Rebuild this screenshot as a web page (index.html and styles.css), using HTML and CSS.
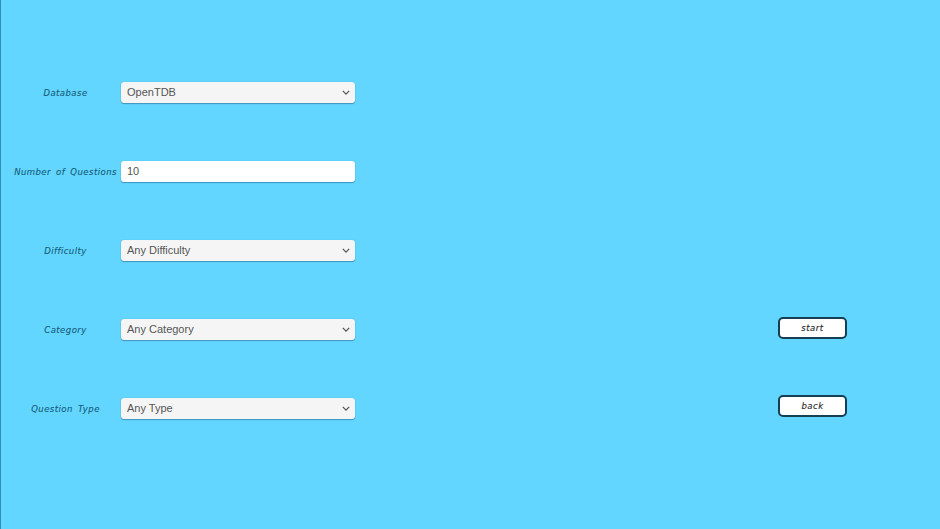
FILE: index.html
```html
<!DOCTYPE html>
<html lang="en">
<head>
<meta charset="utf-8">
<title>Quiz setup</title>
<link rel="stylesheet" href="styles.css">
</head>
<body>
<div class="page">
  <form class="form">
    <div class="row">
      <label class="label">Database</label>
      <div class="field"><select class="control select"><option>OpenTDB</option></select>
        <svg class="chev" viewBox="0 0 10 6"><path d="M1 1l4 4 4-4"/></svg></div>
    </div>
    <div class="row">
      <label class="label">Number of Questions</label>
      <div class="field"><input class="control input" value="10"></div>
    </div>
    <div class="row">
      <label class="label">Difficulty</label>
      <div class="field"><select class="control select"><option>Any Difficulty</option></select>
        <svg class="chev" viewBox="0 0 10 6"><path d="M1 1l4 4 4-4"/></svg></div>
    </div>
    <div class="row">
      <label class="label">Category</label>
      <div class="field"><select class="control select"><option>Any Category</option></select>
        <svg class="chev" viewBox="0 0 10 6"><path d="M1 1l4 4 4-4"/></svg></div>
    </div>
    <div class="row">
      <label class="label">Question Type</label>
      <div class="field"><select class="control select"><option>Any Type</option></select>
        <svg class="chev" viewBox="0 0 10 6"><path d="M1 1l4 4 4-4"/></svg></div>
    </div>
  </form>
  <div class="actions">
    <button class="btn" type="button">start</button>
    <button class="btn" type="button">back</button>
  </div>
</div>
</body>
</html>
```
FILE: styles.css
```css
html, body {
  margin: 0;
  height: 100%;
}
body {
  background: #62d6ff;
  overflow: hidden;
}
.page {
  box-sizing: border-box;
  height: 529px;
  border-left: 1px solid #2f8fb5;
  display: flex;
  justify-content: space-between;
  padding: 82px 93px 0 0;
}
.form {
  display: flex;
  flex-direction: column;
  gap: 58px;
}
.row {
  display: flex;
  align-items: center;
  height: 21px;
}
.label {
  width: 120px;
  padding: 0 4px 0 13px;
  box-sizing: border-box;
  text-align: center;
  white-space: nowrap;
  font-family: "DejaVu Sans", sans-serif;
  font-style: italic;
  font-size: 8.5px;
  letter-spacing: 0.45px;
  word-spacing: 2px;
  color: #155a78;
  -webkit-text-stroke: 0.1px #155a78;
}
.field {
  position: relative;
  width: 234px;
  height: 21px;
}
.control {
  box-sizing: border-box;
  display: block;
  width: 100%;
  height: 100%;
  margin: 0;
  padding: 0 0 1px 6px;
  border: 0;
  border-radius: 3px;
  box-shadow: 0 1px 1px rgba(50, 125, 160, 0.7), 0 0 1px rgba(50, 125, 160, 0.6);
  font-family: "Liberation Sans", sans-serif;
  font-size: 11px;
  color: #555;
  outline: none;
}
.select {
  appearance: none;
  background: #f5f5f5;
}
.input {
  background: #fff;
}
.chev {
  position: absolute;
  right: 5px;
  top: 8px;
  width: 8px;
  height: 5px;
  fill: none;
  stroke: #555;
  stroke-width: 1.6;
}
.actions {
  display: flex;
  flex-direction: column;
  gap: 56px;
  padding-top: 235px;
}
.btn {
  box-sizing: border-box;
  width: 69px;
  height: 22px;
  padding: 0;
  background: #fff;
  border: 2px solid #173f54;
  border-radius: 5px;
  font-family: "DejaVu Sans", sans-serif;
  font-style: italic;
  font-size: 8.5px;
  letter-spacing: 0.5px;
  color: #222;
  -webkit-text-stroke: 0.1px #222;
}
```
